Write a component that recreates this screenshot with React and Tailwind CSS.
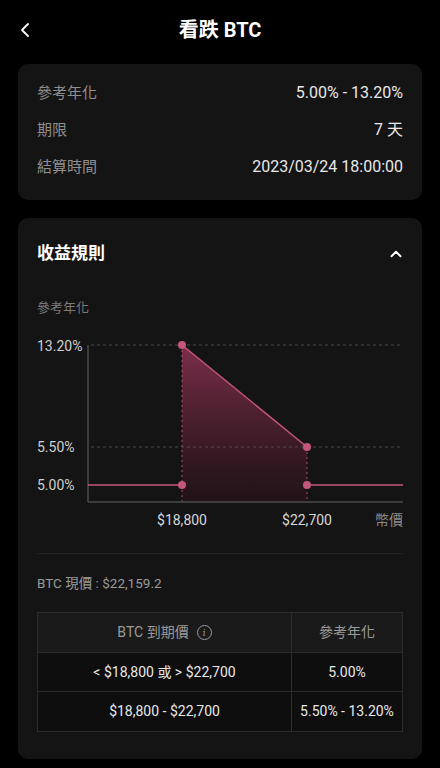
import { ChevronLeft, ChevronUp } from 'lucide-react';

const font = { fontFamily: 'Roboto, "Noto Sans CJK TC", sans-serif' };

function InfoRow({ label, value }) {
    return (
        <div className="flex items-center justify-between h-[22px]">
            <span className="text-[15px] text-[#8f8f8f]">{label}</span>
            <span className="text-[16px] text-[#e8e8e8]">{value}</span>
        </div>
    );
}

function YieldChart() {
    const pink = '#c4567a';
    return (
        <svg width="366" height="240" viewBox="0 0 366 240" className="block">
            <defs>
                <linearGradient id="fill" x1="0" y1="0" x2="0" y2="1">
                    <stop offset="0%" stopColor="#83304e" stopOpacity="0.95" />
                    <stop offset="100%" stopColor="#2a1219" stopOpacity="0.6" />
                </linearGradient>
            </defs>
            <text x="0" y="16" fontSize="13" fill="#7a7a7a" style={font}>參考年化</text>
            <text x="0" y="55" fontSize="14" fill="#cfcfcf" style={font}>13.20%</text>
            <text x="0" y="156" fontSize="14" fill="#cfcfcf" style={font}>5.50%</text>
            <text x="0" y="194" fontSize="14" fill="#cfcfcf" style={font}>5.00%</text>

            <polygon points="145,49 270,151 270,206 145,206" fill="url(#fill)" />

            <line x1="54" y1="49" x2="366" y2="49" stroke="#4a4a4a" strokeDasharray="3 3" />
            <line x1="54" y1="151" x2="366" y2="151" stroke="#4a4a4a" strokeDasharray="3 3" />
            <line x1="145" y1="49" x2="145" y2="206" stroke="#a5506c" strokeDasharray="2 3" />
            <line x1="270" y1="151" x2="270" y2="206" stroke="#a5506c" strokeDasharray="2 3" />

            <line x1="51" y1="49" x2="51" y2="206" stroke="#4a4a4a" strokeWidth="1.5" />
            <line x1="51" y1="206" x2="366" y2="206" stroke="#4a4a4a" strokeWidth="1.5" />

            <line x1="51" y1="189" x2="145" y2="189" stroke={pink} strokeWidth="1.5" />
            <line x1="270" y1="189" x2="366" y2="189" stroke={pink} strokeWidth="1.5" />
            <line x1="145" y1="49" x2="270" y2="151" stroke={pink} strokeWidth="1.5" />

            <circle cx="145" cy="49" r="4" fill={pink} />
            <circle cx="270" cy="151" r="4" fill={pink} />
            <circle cx="145" cy="189" r="4" fill={pink} />
            <circle cx="270" cy="189" r="4" fill={pink} />

            <text x="145" y="229" fontSize="14" fill="#d8d8d8" textAnchor="middle" style={font}>$18,800</text>
            <text x="270" y="229" fontSize="14" fill="#d8d8d8" textAnchor="middle" style={font}>$22,700</text>
            <text x="366" y="229" fontSize="14" fill="#8a8a8a" textAnchor="end" style={font}>幣價</text>
        </svg>
    );
}

export default function App() {
    return (
        <div className="w-[440px] h-[768px] bg-black overflow-hidden" style={font}>
            {/* Header */}
            <div className="relative h-[60px] flex items-center justify-center">
                <ChevronLeft className="absolute left-[13px] top-[18px] w-6 h-6 text-white" strokeWidth={1.8} />
                <h1 className="text-[20px] font-bold text-white">看跌 BTC</h1>
            </div>

            {/* Summary card */}
            <div className="mx-[18px] mt-1 rounded-[10px] bg-[#141414] px-[19px] pt-[18px] pb-[22px] flex flex-col gap-[15px]">
                <InfoRow label="參考年化" value="5.00% - 13.20%" />
                <InfoRow label="期限" value="7 天" />
                <InfoRow label="結算時間" value="2023/03/24 18:00:00" />
            </div>

            {/* Yield rules card */}
            <div className="mx-[18px] mt-[18px] rounded-[10px] bg-[#141414] px-[19px] pt-6 pb-[27px]">
                <div className="flex items-center justify-between h-6">
                    <h2 className="text-[17px] font-bold text-white">收益規則</h2>
                    <ChevronUp className="w-[18px] h-[18px] text-white -mr-0.5" strokeWidth={2.5} />
                </div>

                <div className="mt-[30px]">
                    <YieldChart />
                </div>

                <div className="mt-[17px] border-t border-[#222222]" />

                <p className="mt-5 text-[13.5px] leading-[18px] text-[#9a9a9a]">BTC 現價 : $22,159.2</p>

                <div className="mt-5 border border-[#2c2c2c] text-[14px]">
                    <div className="flex h-[40px] bg-[#1a1a1a] border-b border-[#2c2c2c] text-[#9a9a9a]">
                        <div className="w-[254px] flex items-center justify-center gap-2 border-r border-[#2c2c2c]">
                            <span>BTC 到期價</span>
                            <span className="w-[15px] h-[15px] rounded-full border border-[#9a9a9a] flex items-center justify-center text-[10px] italic font-serif leading-none">i</span>
                        </div>
                        <div className="flex-1 flex items-center justify-center">參考年化</div>
                    </div>
                    <div className="flex h-[39px] bg-[#0e0e0e] border-b border-[#2c2c2c] text-[#e8e8e8]">
                        <div className="w-[254px] flex items-center justify-center border-r border-[#2c2c2c]">&lt; $18,800 或 &gt; $22,700</div>
                        <div className="flex-1 flex items-center justify-center">5.00%</div>
                    </div>
                    <div className="flex h-[39px] bg-[#0e0e0e] text-[#e8e8e8]">
                        <div className="w-[254px] flex items-center justify-center border-r border-[#2c2c2c]">$18,800 - $22,700</div>
                        <div className="flex-1 flex items-center justify-center">5.50% - 13.20%</div>
                    </div>
                </div>
            </div>
        </div>
    );
}
